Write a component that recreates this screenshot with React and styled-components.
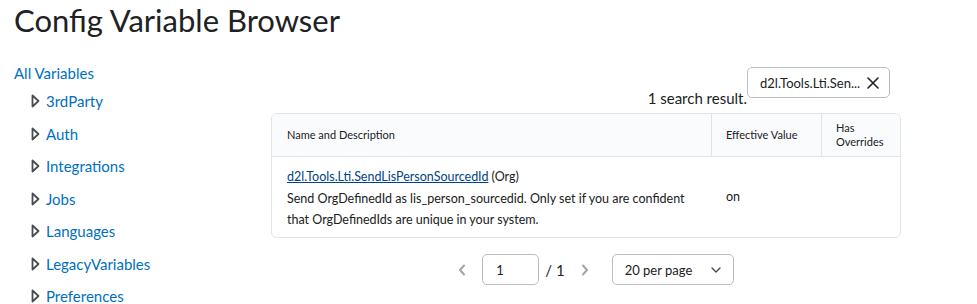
import styled, { createGlobalStyle } from 'styled-components';

const GlobalStyle = createGlobalStyle`
  body {
    margin: 0;
    font-family: Lato, "Noto Sans", sans-serif;
    color: #494c4e;
    background: #fff;
  }
`;

const categories = [
  '3rdParty',
  'Auth',
  'Integrations',
  'Jobs',
  'Languages',
  'LegacyVariables',
  'Preferences',
];

function Caret() {
  return (
    <svg width="9" height="14" viewBox="0 0 9 14">
      <path d="M1.5 1.5 L7.5 7 L1.5 12.5 Z" fill="none" stroke="#494c4e" strokeWidth="1.8" strokeLinejoin="round" />
    </svg>
  );
}

function Chevron({ dir }) {
  return (
    <svg width="8" height="12" viewBox="0 0 8 12">
      <path d={dir === 'left' ? 'M6 1.5 L2 6 L6 10.5' : 'M2 1.5 L6 6 L2 10.5'} fill="none" stroke="#a0a5aa" strokeWidth="2" strokeLinecap="round" strokeLinejoin="round" />
    </svg>
  );
}

function App() {
  return (
    <Page>
      <GlobalStyle />
      <Title>Config Variable Browser</Title>
      <Layout>
        <Nav>
          <NavRoot>All Variables</NavRoot>
          {categories.map((c) => (
            <NavItem key={c}>
              <Caret />
              <NavLink>{c}</NavLink>
            </NavItem>
          ))}
        </Nav>
        <Main>
          <Toolbar>
            <ResultCount>1 search result.</ResultCount>
            <Chip>
              d2l.Tools.Lti.Sen...
              <svg width="12" height="12" viewBox="0 0 12 12">
                <path d="M1 1 L11 11 M11 1 L1 11" stroke="#202122" strokeWidth="1.6" strokeLinecap="round" />
              </svg>
            </Chip>
          </Toolbar>
          <Table>
            <colgroup>
              <col />
              <col style={{ width: 110 }} />
              <col style={{ width: 78 }} />
            </colgroup>
            <thead>
              <tr>
                <Th>Name and Description</Th>
                <Th>Effective Value</Th>
                <Th $last>Has<br />Overrides</Th>
              </tr>
            </thead>
            <tbody>
              <tr>
                <Td>
                  <Line>
                    <VarLink>d2l.Tools.Lti.SendLisPersonSourcedId</VarLink> (Org)
                  </Line>
                  <Line>Send OrgDefinedId as lis_person_sourcedid. Only set if you are confident</Line>
                  <Line>that OrgDefinedIds are unique in your system.</Line>
                </Td>
                <Td $center>on</Td>
                <Td $last />
              </tr>
            </tbody>
          </Table>
          <Pager>
            <Chevron dir="left" />
            <PageInput>1</PageInput>
            <PageTotal>/ 1</PageTotal>
            <Chevron dir="right" />
            <PerPage>
              20 per page
              <svg width="10" height="6" viewBox="0 0 10 6">
                <path d="M1 1 L5 5 L9 1" fill="none" stroke="#494c4e" strokeWidth="1.4" strokeLinecap="round" strokeLinejoin="round" />
              </svg>
            </PerPage>
          </Pager>
        </Main>
      </Layout>
    </Page>
  );
}

const Page = styled.div`
  padding: 0 14px;
`;

const Title = styled.h1`
  margin: 0;
  padding-top: 1px;
  font-size: 31px;
  font-weight: 400;
  line-height: 38px;
  color: #202122;
`;

const Layout = styled.div`
  display: flex;
  margin-top: 24px;
`;

const Nav = styled.nav`
  width: 257px;
  flex-shrink: 0;
`;

const NavRoot = styled.a`
  display: block;
  font-size: 15px;
  line-height: 20px;
  color: #006fbf;
`;

const NavItem = styled.div`
  display: flex;
  align-items: center;
  gap: 6px;
  height: 32.5px;
  padding-left: 17px;
  &:first-of-type {
    margin-top: 2px;
  }
`;

const NavLink = styled.a`
  font-size: 15px;
  color: #006fbf;
`;

const Main = styled.div`
  width: 630px;
  flex-shrink: 0;
`;

const Toolbar = styled.div`
  display: flex;
  justify-content: flex-end;
  height: 40px;
  margin-top: 4px;
  padding-right: 11px;
  margin-bottom: 6px;
`;

const ResultCount = styled.div`
  align-self: flex-end;
  font-size: 15px;
  line-height: 18px;
  color: #202122;
`;

const Chip = styled.div`
  align-self: flex-start;
  display: flex;
  align-items: center;
  justify-content: space-between;
  box-sizing: border-box;
  width: 143px;
  height: 31px;
  padding: 0 10px 0 12px;
  border: 1px solid #b9bec3;
  border-radius: 5px;
  font-size: 13px;
  color: #202122;
  background: #fff;
`;

const Table = styled.table`
  width: 100%;
  border-collapse: separate;
  border-spacing: 0;
  border: 1px solid #dfe4ea;
  border-radius: 6px;
  overflow: hidden;
  table-layout: fixed;
`;

const Th = styled.th`
  box-sizing: border-box;
  height: 43px;
  padding: 0 14px;
  text-align: left;
  vertical-align: middle;
  font-size: 11px;
  font-weight: 400;
  line-height: 14px;
  color: #202122;
  background: #f9fbfd;
  border-bottom: 1px solid #dfe4ea;
  border-right: ${(p) => (p.$last ? 'none' : '1px solid #dfe4ea')};
  &:first-child {
    padding-left: 15px;
  }
`;

const Td = styled.td`
  box-sizing: border-box;
  height: 80px;
  padding: ${(p) => (p.$center ? '0 14px 0' : '9px 14px 0')};
  vertical-align: ${(p) => (p.$center ? 'middle' : 'top')};
  font-size: 12.5px;
  line-height: 21.5px;
  color: #202122;
  &:first-child {
    padding-left: 15px;
  }
`;

const Line = styled.div`
  white-space: nowrap;
`;

const VarLink = styled.a`
  color: #004489;
  text-decoration: underline;
`;

const Pager = styled.div`
  display: flex;
  align-items: center;
  justify-content: center;
  margin-top: 16px;
  padding-left: 20px;
`;

const PageInput = styled.div`
  box-sizing: border-box;
  width: 57px;
  height: 31px;
  margin-left: 16px;
  padding-left: 13px;
  display: flex;
  align-items: center;
  border: 1px solid #b9bec3;
  border-radius: 5px;
  font-size: 13px;
  color: #202122;
`;

const PageTotal = styled.span`
  margin: 0 16px 0 6px;
  font-size: 15px;
  color: #202122;
`;

const PerPage = styled.div`
  box-sizing: border-box;
  width: 122px;
  height: 31px;
  margin-left: 23px;
  padding: 0 12px;
  display: flex;
  align-items: center;
  justify-content: space-between;
  border: 1px solid #b9bec3;
  border-radius: 5px;
  font-size: 13px;
  color: #202122;
`;

export default App;
